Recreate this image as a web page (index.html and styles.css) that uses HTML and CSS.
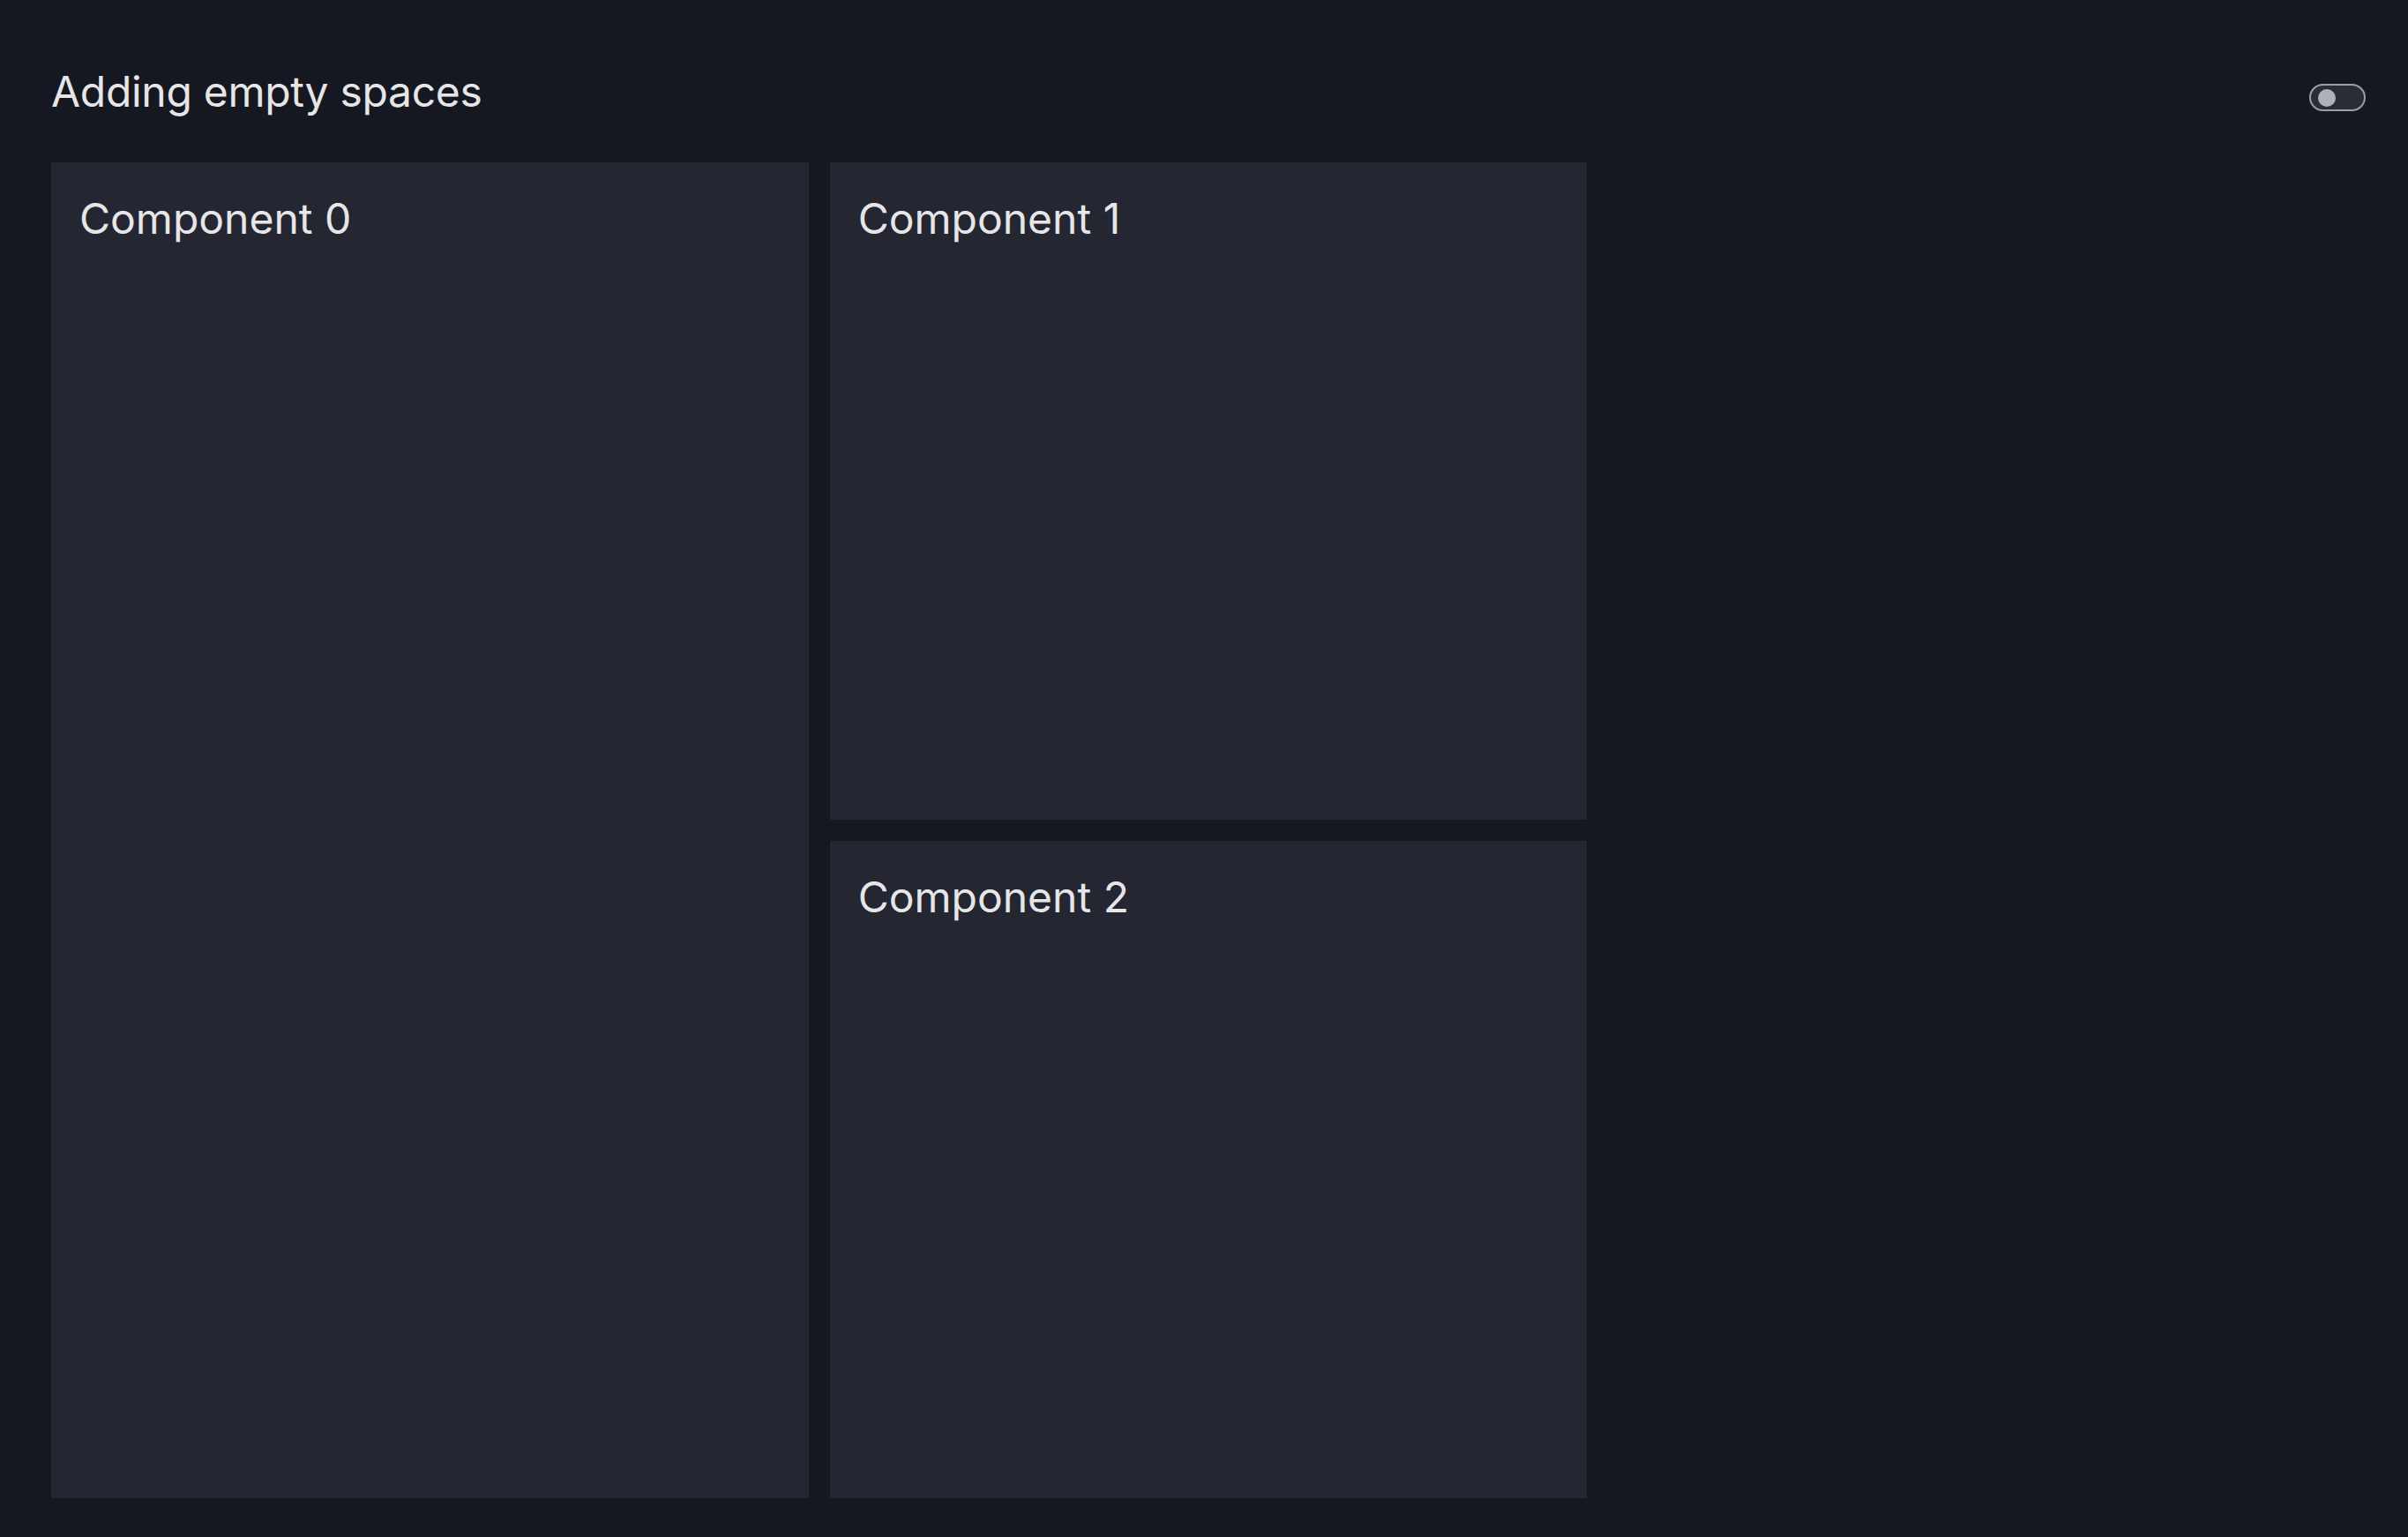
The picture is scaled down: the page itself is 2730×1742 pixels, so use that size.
FILE: index.html
```html
<!DOCTYPE html>
<html lang="en">
<head>
<meta charset="utf-8">
<title>Adding empty spaces</title>
<link rel="stylesheet" href="styles.css">
</head>
<body>
<div class="page">
  <header class="header">
    <h1 class="title">Adding empty spaces</h1>
    <div class="toggle" role="switch" aria-checked="false"><span class="knob"></span></div>
  </header>
  <main class="grid">
    <section class="panel panel-tall"><h2 class="panel-title">Component 0</h2></section>
    <section class="panel"><h2 class="panel-title">Component 1</h2></section>
    <section class="panel panel-c2"><h2 class="panel-title">Component 2</h2></section>
  </main>
</div>
</body>
</html>
```

FILE: styles.css
```css
html, body {
  margin: 0;
  padding: 0;
  background: #151821;
}
body {
  font-family: Inter, "Noto Sans", sans-serif;
  color: #e6e6e8;
}
.page {
  padding: 74px 48px 0 58px;
  box-sizing: border-box;
  height: 1742px;
}
.header {
  display: flex;
  justify-content: space-between;
  align-items: flex-start;
  height: 60px;
  margin-bottom: 50px;
}
.title {
  margin: 0;
  font-size: 48px;
  line-height: 60px;
  font-weight: 400;
  letter-spacing: -0.3px;
}
.toggle {
  margin-top: 21px;
  width: 64px;
  height: 31px;
  box-sizing: border-box;
  border: 2px solid #9d9ea4;
  border-radius: 16px;
  background: #2b2d35;
  display: flex;
  align-items: center;
  padding-left: 8px;
}
.knob {
  width: 20px;
  height: 20px;
  border-radius: 50%;
  background: #b0b1b6;
}
.grid {
  display: grid;
  grid-template-columns: repeat(3, 1fr);
  grid-template-rows: repeat(2, 1fr);
  gap: 24px;
  height: 1514px;
}
.panel {
  background: #242632;
  padding: 28px 32px;
  box-sizing: border-box;
}
.panel-tall {
  grid-row: 1 / 3;
}
.panel-c2 {
  grid-column: 2;
  grid-row: 2;
}
.panel-title {
  margin: 0;
  font-size: 48px;
  line-height: 72px;
  font-weight: 400;
}
```
